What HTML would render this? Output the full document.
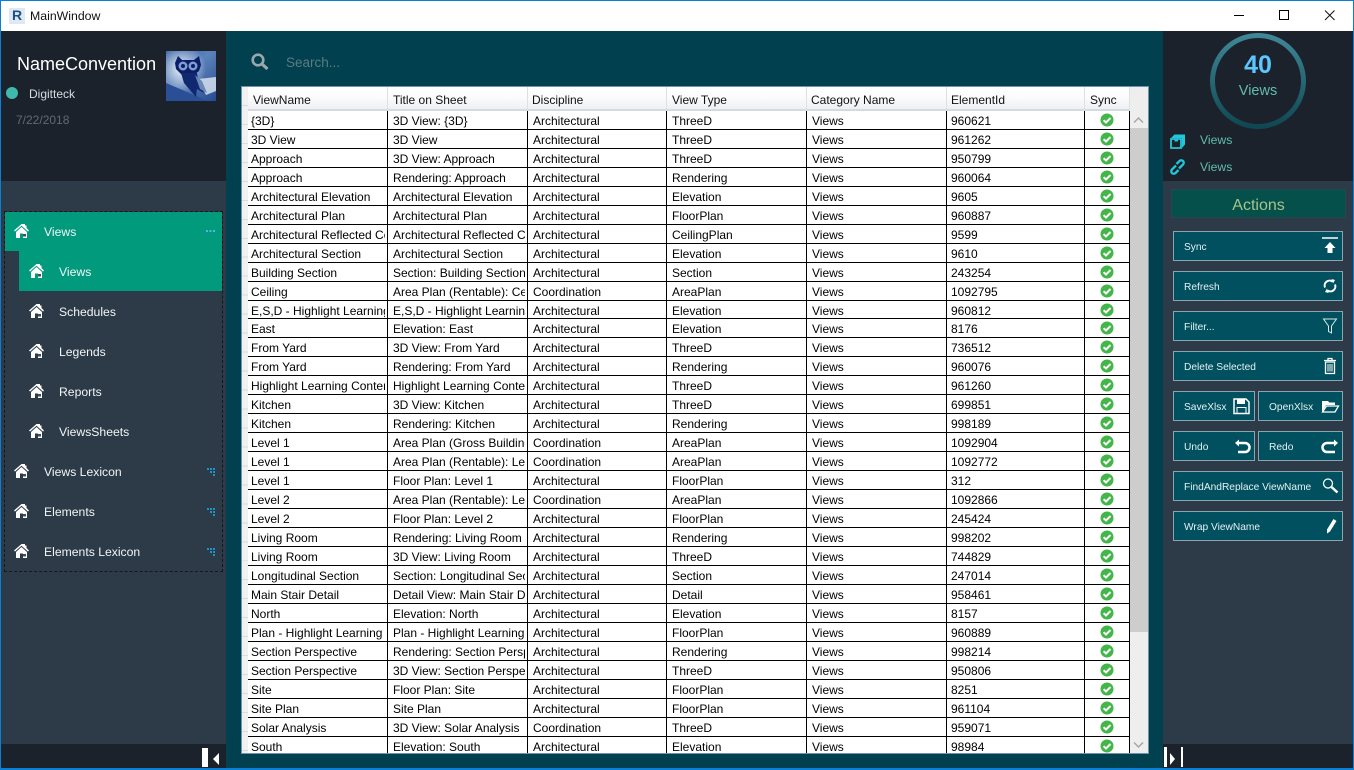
<!DOCTYPE html>
<html><head><meta charset="utf-8"><title>MainWindow</title>
<style>
*{box-sizing:border-box;margin:0;padding:0}
html,body{width:1354px;height:770px;overflow:hidden;background:#00404f;font-family:"Liberation Sans",sans-serif}
.a{position:absolute}
.t{position:absolute;white-space:nowrap;line-height:16px}
.nav{font-size:12.2px;color:#f0f6f8}
.btn{position:absolute;height:30px;background:#00505f;border:1px solid #8aa5ad;color:#e4f0f2;font-size:10.2px;line-height:32px;padding-left:10px;white-space:nowrap}
.btn svg{position:absolute;top:4px;width:20px;height:20px}
#grid{position:absolute;left:248px;top:110.82px;width:882px;height:642.18px;overflow:hidden;background:#fff}
.r{display:flex;height:18.97px;font-size:12px;line-height:20px;color:#000;border-bottom:1px solid #000}
.r i{font-style:normal;display:block;overflow:hidden;white-space:nowrap;border-right:2px solid #fff;padding-left:5px}
.r i:nth-child(1){width:139px;padding-left:3px;margin-right:1px}
.r i:nth-child(2){width:139px;margin-right:1px}
.r i:nth-child(3){width:138px;margin-right:1px}
.r i:nth-child(4){width:139px;margin-right:1px}
.r i:nth-child(5){width:139px;margin-right:1px}
.r i:nth-child(6){width:137px;padding-left:4px;margin-right:1px}
.r i:nth-child(7){width:45px;padding:0;position:relative}
.r svg{position:absolute;left:15px;top:2px;width:14px;height:14px}
.v{position:absolute;top:0;width:1px;height:643px;background:#000}
.h{position:absolute;top:87px;height:24px;background:linear-gradient(#fff 0,#fbfbfc 50%,#eef0f3 100%);border-right:1px solid #dde1e6;border-bottom:2px solid #d5dae0;font-size:12px;line-height:26px;color:#111;padding-left:5px;white-space:nowrap}
</style></head>
<body>
<svg width="0" height="0" style="position:absolute">
<symbol id="home" viewBox="0 0 15 14"><path d="M8 0h3v1.500h1.500V4L15 6.500 14 7.500 7.500 1.800 1 7.500 0 6.500 7.500 0z" fill="#fff"/><path d="M2 8 7.500 3 13 8v6H9V9.500H6V14H2z" fill="#fff"/><path d="M9 10h3v2.500H9z" fill="#2d3a47" opacity=".9"/></symbol>
<symbol id="chk" viewBox="0 0 14 14"><circle cx="7" cy="7" r="6.500" fill="#43b649"/><path d="M3.600 7.200 6 9.500 10.500 5" fill="none" stroke="#fff" stroke-width="2"/></symbol>
<symbol id="dots" viewBox="0 0 9 9"><path d="M0 1h2v2H0zM3 1h2v2H3zM6 1h2v2H6zM3 4h2v2H3zM6 4h2v2H6zM6 7h2v2H6z" fill="#1c93c9"/></symbol>
</svg>

<!-- title bar -->
<div class="a" style="left:0;top:0;width:1354px;height:770px;border:1px solid #0a7fd6;border-width:1px 1px 2px 1px;z-index:20;pointer-events:none"></div>
<div class="a" style="left:0;top:0;width:1354px;height:31px;background:#fff"></div>
<div class="a" style="left:9px;top:8px;width:16px;height:16px;background:#dfe9f3"></div>
<div class="t" style="left:12px;top:7px;font-size:14px;font-weight:bold;color:#1f4f86">R</div>
<div class="t" style="left:30px;top:8px;font-size:12.3px;color:#111">MainWindow</div>
<svg class="a" style="left:1230px;top:8px" width="110" height="16"><path d="M4 7.500h10" stroke="#000" fill="none"/><rect x="49.500" y="2.500" width="9" height="9" fill="none" stroke="#000" stroke-width="1"/><path d="M95 2.500l9.500 9.500M104.500 2.500L95 12" stroke="#111" fill="none"/></svg>

<!-- left panel -->
<div class="a" style="left:0;top:31px;width:226px;height:150px;background:#1b222c"></div>
<div class="a" style="left:0;top:181px;width:226px;height:563px;background:#2d3a47"></div>
<div class="a" style="left:0;top:744px;width:226px;height:26px;background:#1b222c"></div>
<div class="t" style="left:17px;top:53px;font-size:18px;line-height:22px;color:#fff">NameConvention</div>
<div class="a" style="left:6px;top:87px;width:12px;height:12px;border-radius:50%;background:#3fb8ae"></div>
<div class="t" style="left:29px;top:86px;font-size:12px;color:#d8dde0">Digitteck</div>
<div class="t" style="left:16px;top:112px;font-size:12px;color:#626a70">7/22/2018</div>
<svg class="a" style="left:166px;top:51px" width="50" height="50" viewBox="0 0 50 50">
<defs><linearGradient id="og" x1="0" y1="0" x2="1" y2="1"><stop offset="0" stop-color="#2f5a9e"/><stop offset=".45" stop-color="#5d83bb"/><stop offset="1" stop-color="#264a90"/></linearGradient><radialGradient id="og2" cx=".3" cy=".35" r=".5"><stop offset="0" stop-color="#e8f0f8"/><stop offset="1" stop-color="#e8f0f8" stop-opacity="0"/></radialGradient></defs>
<rect width="50" height="50" fill="url(#og)"/><rect width="50" height="50" fill="url(#og2)"/>
<path d="M0 32 42 50H0z" fill="#2a4f96"/><path d="M32 28 50 26V40L40 44z" fill="#dfe8f3" opacity=".8"/>
<path d="M12 5 16 9H28L33 5 35 14 33 20 28 24 H16L10 18 9 12z" fill="#0c1e66"/>
<path d="M15 22H31L33 32 38 42 31 38 30 46 18 32z" fill="#10286f"/><path d="M29 24 36 30 41 42 34 38z" fill="#6a87b5"/>
<circle cx="17" cy="15" r="4.500" fill="#7f9dd0"/><circle cx="27" cy="15" r="4.500" fill="#7f9dd0"/><circle cx="17" cy="15" r="2" fill="#0c1e66"/><circle cx="27" cy="15" r="2" fill="#0c1e66"/>
</svg>

<!-- nav -->
<div class="a" style="left:5px;top:212px;width:217px;height:39px;background:#029a7c"></div>
<div class="a" style="left:19px;top:251px;width:203px;height:40px;background:#029a7c"></div>
<div class="a" style="left:4px;top:211px;width:219px;height:361px;border:1px dashed #14181d"></div>
<svg class="a" style="left:14px;top:224px" width="15" height="14"><use href="#home"/></svg>
<svg class="a" style="left:29px;top:264px" width="15" height="14"><use href="#home"/></svg>
<svg class="a" style="left:29px;top:304px" width="15" height="14"><use href="#home"/></svg>
<svg class="a" style="left:29px;top:344px" width="15" height="14"><use href="#home"/></svg>
<svg class="a" style="left:29px;top:384px" width="15" height="14"><use href="#home"/></svg>
<svg class="a" style="left:29px;top:424px" width="15" height="14"><use href="#home"/></svg>
<svg class="a" style="left:14px;top:464px" width="15" height="14"><use href="#home"/></svg>
<svg class="a" style="left:14px;top:504px" width="15" height="14"><use href="#home"/></svg>
<svg class="a" style="left:14px;top:544px" width="15" height="14"><use href="#home"/></svg>
<div class="t nav" style="left:44px;top:224px">Views</div>
<div class="t nav" style="left:59px;top:264px">Views</div>
<div class="t nav" style="left:59px;top:304px">Schedules</div>
<div class="t nav" style="left:59px;top:344px">Legends</div>
<div class="t nav" style="left:59px;top:384px">Reports</div>
<div class="t nav" style="left:59px;top:424px">ViewsSheets</div>
<div class="t nav" style="left:44px;top:464px">Views Lexicon</div>
<div class="t nav" style="left:44px;top:504px">Elements</div>
<div class="t nav" style="left:44px;top:544px">Elements Lexicon</div>
<svg class="a" style="left:206px;top:230px" width="9" height="3"><path d="M0 0h2v2H0zM3.500 0h2v2h-2zM7 0h2v2H7z" fill="#55b4e8"/></svg>
<svg class="a" style="left:207px;top:467px" width="9" height="9"><use href="#dots"/></svg>
<svg class="a" style="left:207px;top:507px" width="9" height="9"><use href="#dots"/></svg>
<svg class="a" style="left:207px;top:547px" width="9" height="9"><use href="#dots"/></svg>
<div class="a" style="left:202px;top:748px;width:6px;height:19px;background:#fff"></div>
<svg class="a" style="left:213px;top:752px" width="7" height="14"><path d="M0 7 6 1V13z" fill="#fff"/></svg>

<!-- search -->
<svg class="a" style="left:250px;top:52px" width="20" height="20" viewBox="0 0 20 20"><circle cx="8" cy="8" r="5.300" fill="none" stroke="#9aa7ab" stroke-width="2.600"/><path d="M12 12l5.500 5" stroke="#9aa7ab" stroke-width="3.200" fill="none"/></svg>
<div class="t" style="left:286px;top:55px;font-size:13.5px;color:#5e7a82">Search...</div>

<!-- table -->
<div class="a" style="left:241px;top:86px;width:908px;height:668px;border:1px solid #6f93ab;background:#eeeeee"></div>
<div class="a" style="left:242px;top:87px;width:6px;height:666px;background:repeating-linear-gradient(#f1f1f1 0,#f1f1f1 17.97px,#dcdcdc 17.97px,#dcdcdc 18.97px)"></div>
<div class="h" style="left:248px;width:140px">ViewName</div>
<div class="h" style="left:388px;width:140px">Title on Sheet</div>
<div class="h" style="left:528px;width:139px;padding-left:4px">Discipline</div>
<div class="h" style="left:667px;width:140px">View Type</div>
<div class="h" style="left:807px;width:140px;padding-left:4px">Category Name</div>
<div class="h" style="left:947px;width:138px;padding-left:4px">ElementId</div>
<div class="h" style="left:1085px;width:45px">Sync</div>
<div id="grid">
<div class="r"><i>{3D}</i><i>3D View: {3D}</i><i>Architectural</i><i>ThreeD</i><i>Views</i><i>960621</i><i><svg><use href="#chk"/></svg></i></div>
<div class="r"><i>3D View</i><i>3D View</i><i>Architectural</i><i>ThreeD</i><i>Views</i><i>961262</i><i><svg><use href="#chk"/></svg></i></div>
<div class="r"><i>Approach</i><i>3D View: Approach</i><i>Architectural</i><i>ThreeD</i><i>Views</i><i>950799</i><i><svg><use href="#chk"/></svg></i></div>
<div class="r"><i>Approach</i><i>Rendering: Approach</i><i>Architectural</i><i>Rendering</i><i>Views</i><i>960064</i><i><svg><use href="#chk"/></svg></i></div>
<div class="r"><i>Architectural Elevation</i><i>Architectural Elevation</i><i>Architectural</i><i>Elevation</i><i>Views</i><i>9605</i><i><svg><use href="#chk"/></svg></i></div>
<div class="r"><i>Architectural Plan</i><i>Architectural Plan</i><i>Architectural</i><i>FloorPlan</i><i>Views</i><i>960887</i><i><svg><use href="#chk"/></svg></i></div>
<div class="r"><i>Architectural Reflected Ceiling</i><i>Architectural Reflected Ceiling</i><i>Architectural</i><i>CeilingPlan</i><i>Views</i><i>9599</i><i><svg><use href="#chk"/></svg></i></div>
<div class="r"><i>Architectural Section</i><i>Architectural Section</i><i>Architectural</i><i>Elevation</i><i>Views</i><i>9610</i><i><svg><use href="#chk"/></svg></i></div>
<div class="r"><i>Building Section</i><i>Section: Building Section</i><i>Architectural</i><i>Section</i><i>Views</i><i>243254</i><i><svg><use href="#chk"/></svg></i></div>
<div class="r"><i>Ceiling</i><i>Area Plan (Rentable): Ceiling</i><i>Coordination</i><i>AreaPlan</i><i>Views</i><i>1092795</i><i><svg><use href="#chk"/></svg></i></div>
<div class="r"><i>E,S,D - Highlight Learning</i><i>E,S,D - Highlight Learning</i><i>Architectural</i><i>Elevation</i><i>Views</i><i>960812</i><i><svg><use href="#chk"/></svg></i></div>
<div class="r"><i>East</i><i>Elevation: East</i><i>Architectural</i><i>Elevation</i><i>Views</i><i>8176</i><i><svg><use href="#chk"/></svg></i></div>
<div class="r"><i>From Yard</i><i>3D View: From Yard</i><i>Architectural</i><i>ThreeD</i><i>Views</i><i>736512</i><i><svg><use href="#chk"/></svg></i></div>
<div class="r"><i>From Yard</i><i>Rendering: From Yard</i><i>Architectural</i><i>Rendering</i><i>Views</i><i>960076</i><i><svg><use href="#chk"/></svg></i></div>
<div class="r"><i>Highlight Learning Content</i><i>Highlight Learning Content</i><i>Architectural</i><i>ThreeD</i><i>Views</i><i>961260</i><i><svg><use href="#chk"/></svg></i></div>
<div class="r"><i>Kitchen</i><i>3D View: Kitchen</i><i>Architectural</i><i>ThreeD</i><i>Views</i><i>699851</i><i><svg><use href="#chk"/></svg></i></div>
<div class="r"><i>Kitchen</i><i>Rendering: Kitchen</i><i>Architectural</i><i>Rendering</i><i>Views</i><i>998189</i><i><svg><use href="#chk"/></svg></i></div>
<div class="r"><i>Level 1</i><i>Area Plan (Gross Building)</i><i>Coordination</i><i>AreaPlan</i><i>Views</i><i>1092904</i><i><svg><use href="#chk"/></svg></i></div>
<div class="r"><i>Level 1</i><i>Area Plan (Rentable): Level 1</i><i>Coordination</i><i>AreaPlan</i><i>Views</i><i>1092772</i><i><svg><use href="#chk"/></svg></i></div>
<div class="r"><i>Level 1</i><i>Floor Plan: Level 1</i><i>Architectural</i><i>FloorPlan</i><i>Views</i><i>312</i><i><svg><use href="#chk"/></svg></i></div>
<div class="r"><i>Level 2</i><i>Area Plan (Rentable): Level 2</i><i>Coordination</i><i>AreaPlan</i><i>Views</i><i>1092866</i><i><svg><use href="#chk"/></svg></i></div>
<div class="r"><i>Level 2</i><i>Floor Plan: Level 2</i><i>Architectural</i><i>FloorPlan</i><i>Views</i><i>245424</i><i><svg><use href="#chk"/></svg></i></div>
<div class="r"><i>Living Room</i><i>Rendering: Living Room</i><i>Architectural</i><i>Rendering</i><i>Views</i><i>998202</i><i><svg><use href="#chk"/></svg></i></div>
<div class="r"><i>Living Room</i><i>3D View: Living Room</i><i>Architectural</i><i>ThreeD</i><i>Views</i><i>744829</i><i><svg><use href="#chk"/></svg></i></div>
<div class="r"><i>Longitudinal Section</i><i>Section: Longitudinal Section</i><i>Architectural</i><i>Section</i><i>Views</i><i>247014</i><i><svg><use href="#chk"/></svg></i></div>
<div class="r"><i>Main Stair Detail</i><i>Detail View: Main Stair Detail</i><i>Architectural</i><i>Detail</i><i>Views</i><i>958461</i><i><svg><use href="#chk"/></svg></i></div>
<div class="r"><i>North</i><i>Elevation: North</i><i>Architectural</i><i>Elevation</i><i>Views</i><i>8157</i><i><svg><use href="#chk"/></svg></i></div>
<div class="r"><i>Plan - Highlight Learning</i><i>Plan - Highlight Learning</i><i>Architectural</i><i>FloorPlan</i><i>Views</i><i>960889</i><i><svg><use href="#chk"/></svg></i></div>
<div class="r"><i>Section Perspective</i><i>Rendering: Section Perspective</i><i>Architectural</i><i>Rendering</i><i>Views</i><i>998214</i><i><svg><use href="#chk"/></svg></i></div>
<div class="r"><i>Section Perspective</i><i>3D View: Section Perspective</i><i>Architectural</i><i>ThreeD</i><i>Views</i><i>950806</i><i><svg><use href="#chk"/></svg></i></div>
<div class="r"><i>Site</i><i>Floor Plan: Site</i><i>Architectural</i><i>FloorPlan</i><i>Views</i><i>8251</i><i><svg><use href="#chk"/></svg></i></div>
<div class="r"><i>Site Plan</i><i>Site Plan</i><i>Architectural</i><i>FloorPlan</i><i>Views</i><i>961104</i><i><svg><use href="#chk"/></svg></i></div>
<div class="r"><i>Solar Analysis</i><i>3D View: Solar Analysis</i><i>Coordination</i><i>ThreeD</i><i>Views</i><i>959071</i><i><svg><use href="#chk"/></svg></i></div>
<div class="r"><i>South</i><i>Elevation: South</i><i>Architectural</i><i>Elevation</i><i>Views</i><i>98984</i><i><svg><use href="#chk"/></svg></i></div>
<div class="v" style="left:139px"></div><div class="v" style="left:279px"></div><div class="v" style="left:418px"></div><div class="v" style="left:558px"></div><div class="v" style="left:698px"></div><div class="v" style="left:836px"></div><div class="v" style="left:881px"></div>
</div>
<div class="a" style="left:1130px;top:128px;width:18px;height:504px;background:#cdcdcd"></div>
<svg class="a" style="left:1133px;top:116px" width="11" height="8"><path d="M1 6.500 5.500 2 10 6.500" fill="none" stroke="#a6a6a6" stroke-width="1.500"/></svg>
<svg class="a" style="left:1133px;top:741px" width="11" height="8"><path d="M1 1.500 5.500 6 10 1.500" fill="none" stroke="#a6a6a6" stroke-width="1.500"/></svg>

<!-- right panel -->
<div class="a" style="left:1163px;top:31px;width:191px;height:150px;background:#1b222c"></div>
<div class="a" style="left:1163px;top:181px;width:191px;height:563px;background:#2d3a47"></div>
<div class="a" style="left:1163px;top:744px;width:191px;height:26px;background:#1b222c"></div>
<svg class="a" style="left:1208px;top:31px" width="100" height="100">
<defs><linearGradient id="cg" x1="0" y1="0" x2="0" y2="1"><stop offset="0" stop-color="#3f8796"/><stop offset="1" stop-color="#0f4853"/></linearGradient></defs>
<circle cx="50" cy="50" r="45.500" fill="none" stroke="url(#cg)" stroke-width="5"/></svg>
<div class="t" style="left:1208px;width:100px;text-align:center;top:52px;line-height:26px;font-size:25px;font-weight:bold;color:#5cc6ff">40</div>
<div class="t" style="left:1208px;width:100px;text-align:center;top:83px;font-size:14.500px;color:#62bcae">Views</div>
<svg class="a" style="left:1170px;top:134px" width="15" height="15" viewBox="0 0 15 15"><path d="M1 5h10v9H1z" fill="none" stroke="#21c6d8" stroke-width="1.800"/><path d="M1 4 4.500 0.500H15V10.500L12 14V4z" fill="#21c6d8"/><path d="M4.500 4.500h3.500v3H4.500z" fill="#21c6d8"/></svg>
<svg class="a" style="left:1170px;top:159px" width="15" height="16" viewBox="0 0 15 16"><g fill="none" stroke="#21c6d8" stroke-width="2.300"><path d="M6 6.500 2 10.500a2.200 2.200 0 0 0 3.500 3.500L8.500 11"/><path d="M9 9.500 13 5.500A2.200 2.200 0 0 0 9.500 2L6.500 5"/></g></svg>
<div class="t" style="left:1200px;top:132px;font-size:12.200px;color:#62bcae">Views</div>
<div class="t" style="left:1200px;top:159px;font-size:12.200px;color:#62bcae">Views</div>

<div class="a" style="left:1171px;top:189px;width:175px;height:29px;background:#05504b;border:1px solid #26474e;color:#a6c48c;font-size:16px;line-height:32px;text-align:center">Actions</div>

<div class="btn" style="left:1173px;top:231px;width:170px">Sync<svg style="left:146px" viewBox="0 0 20 20"><path d="M2 2h16" stroke="#fff" stroke-width="1.500"/><path d="M10 6 15.500 12H12.500V17H7.500V12H4.500z" fill="#fff"/></svg></div>
<div class="btn" style="left:1173px;top:271px;width:170px">Refresh<svg style="left:146px" viewBox="0 0 20 20"><path d="M5 11.500A5 5 0 0 1 12.500 5.500M15 8.500A5 5 0 0 1 7.500 14.500" fill="none" stroke="#fff" stroke-width="2"/><path d="M11.500 3 15 4 13 7.500zM8.500 17 5 16 7 12.500z" fill="#fff"/></svg></div>
<div class="btn" style="left:1173px;top:311px;width:170px">Filter...<svg style="left:146px" viewBox="0 0 20 20"><path d="M3.500 3h13L11.500 10V17L8.500 15.500V10z" fill="none" stroke="#d8e6e8"/></svg></div>
<div class="btn" style="left:1173px;top:351px;width:170px">Delete Selected<svg style="left:146px" viewBox="0 0 20 20"><path d="M4 4.500h12M8 4V2.500h4V4" fill="none" stroke="#fff" stroke-width="1.300"/><path d="M5.500 6h9v11.500h-9z" fill="none" stroke="#fff" stroke-width="1.300"/><path d="M8 8v7.500M10 8v7.500M12 8v7.500" stroke="#fff"/></svg></div>
<div class="btn" style="left:1173px;top:391px;width:82px">SaveXlsx<svg style="left:57px" viewBox="0 0 20 20"><path d="M3 3h12l3 3v11.500H3z" fill="none" stroke="#fff" stroke-width="1.500"/><path d="M6 3h8v5H6z" fill="#fff"/><path d="M6 11.500h9v6H6z" fill="none" stroke="#fff"/></svg></div>
<div class="btn" style="left:1258px;top:391px;width:85px">OpenXlsx<svg style="left:61px" viewBox="0 0 20 20"><path d="M2 5h6l1.500 1.500H15V9H6L2 16z" fill="#fff"/><path d="M6.500 10H18.500L15 16H2.500z" fill="none" stroke="#fff" stroke-width="1.300"/></svg></div>
<div class="btn" style="left:1173px;top:431px;width:82px">Undo<svg style="left:58px" viewBox="0 0 20 20"><path d="M5 7h8a4.500 4.500 0 0 1 0 9H6" fill="none" stroke="#fff" stroke-width="2.500"/><path d="M3 7 7 3.500V10.500z" fill="#fff"/></svg></div>
<div class="btn" style="left:1258px;top:431px;width:85px">Redo<svg style="left:61px" viewBox="0 0 20 20"><path d="M15 7H7a4.500 4.500 0 0 0 0 9h8" fill="none" stroke="#fff" stroke-width="2.500"/><path d="M18 7 14 3.500V10.500z" fill="#fff"/></svg></div>
<div class="btn" style="left:1173px;top:471px;width:170px">FindAndReplace ViewName<svg style="left:146px" viewBox="0 0 20 20"><circle cx="8" cy="7.500" r="4.500" fill="none" stroke="#fff" stroke-width="1.300"/><path d="M11.500 11 17.500 16.500" stroke="#fff" stroke-width="2.500"/></svg></div>
<div class="btn" style="left:1173px;top:511px;width:170px">Wrap ViewName<svg style="left:146px" viewBox="0 0 20 20"><path d="M13.500 3 16.500 5 10 15.500 7 17.500 7 13.500z" fill="#fff"/></svg></div>

<div class="a" style="left:1164px;top:747px;width:3px;height:20px;background:#fff"></div>
<svg class="a" style="left:1169px;top:752px" width="7" height="14"><path d="M1 1 6 7 1 13z" fill="#fff"/></svg>
<div class="a" style="left:1181px;top:747px;width:2px;height:20px;background:#fff"></div>
</body></html>
